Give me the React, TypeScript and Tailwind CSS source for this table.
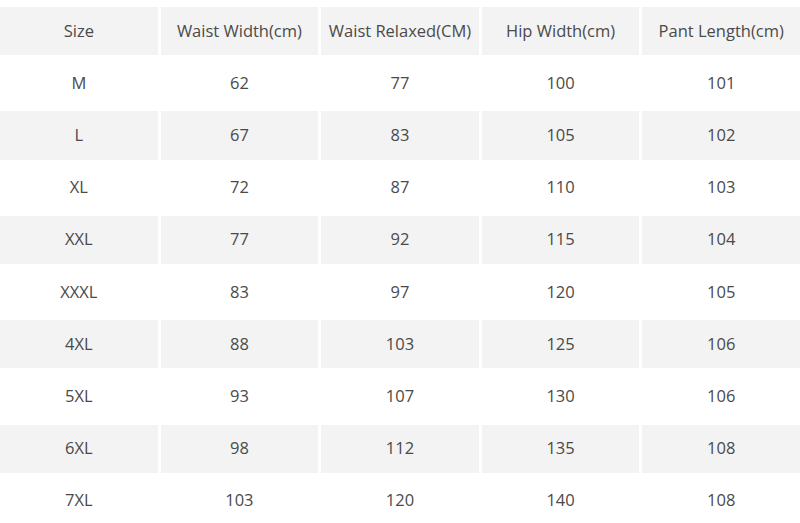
import React from 'react';

const HEADERS = ['Size', 'Waist Width(cm)', 'Waist Relaxed(CM)', 'Hip Width(cm)', 'Pant Length(cm)'];

const ROWS: string[][] = [
  ['M', '62', '77', '100', '101'],
  ['L', '67', '83', '105', '102'],
  ['XL', '72', '87', '110', '103'],
  ['XXL', '77', '92', '115', '104'],
  ['XXXL', '83', '97', '120', '105'],
  ['4XL', '88', '103', '125', '106'],
  ['5XL', '93', '107', '130', '106'],
  ['6XL', '98', '112', '135', '108'],
  ['7XL', '103', '120', '140', '108'],
];

const Row: React.FC<{ cells: string[]; shaded: boolean }> = ({ cells, shaded }) => (
  <div className="grid grid-cols-5 gap-x-[3px] h-[52.2px] py-[2px] shrink-0">
    {cells.map((c, i) => (
      <div
        key={i}
        className={`flex items-center justify-center text-[16.5px] text-[#4a4a4a] ${shaded ? 'bg-[#f3f3f3]' : 'bg-white'}`}
      >
        {c}
      </div>
    ))}
  </div>
);

export default function App() {
  return (
    <div
      className="w-[800px] h-[523px] overflow-hidden bg-white pt-[5px] flex flex-col"
      style={{ fontFamily: '"Open Sans", "Noto Sans", sans-serif' }}
    >
      <Row cells={HEADERS} shaded />
      {ROWS.map((r, i) => (
        <Row key={r[0]} cells={r} shaded={i % 2 === 1} />
      ))}
    </div>
  );
}
